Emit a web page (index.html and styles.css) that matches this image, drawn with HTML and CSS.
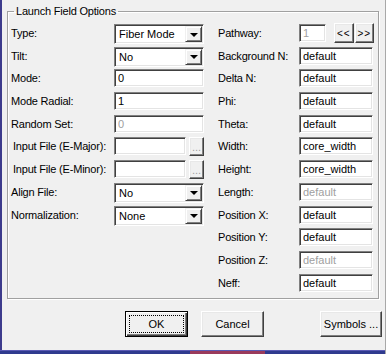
FILE: index.html
```html
<!DOCTYPE html>
<html lang="en">

<head>
    <meta charset="UTF-8">
    <title>Launch Field Options</title>
    <link rel="stylesheet" href="styles.css">
</head>

<body>
    <div class="window">
        <!-- 选项分组框 -->
        <fieldset class="group">
            <legend>Launch Field Options</legend>
            <div class="columns">
                <div class="col col-left">
                    <label>Type:</label>
                    <div class="combo"><span>Fiber Mode</span><i class="drop"></i></div>

                    <label>Tilt:</label>
                    <div class="combo"><span>No</span><i class="drop"></i></div>

                    <label>Mode:</label>
                    <input class="field" type="text" value="0">

                    <label>Mode Radial:</label>
                    <input class="field" type="text" value="1">

                    <label>Random Set:</label>
                    <input class="field" type="text" value="0" disabled>

                    <label class="indent">Input File (E-Major):</label>
                    <div class="file-row">
                        <input class="field" type="text" value="">
                        <button class="btn btn-browse" disabled>...</button>
                    </div>

                    <label class="indent">Input File (E-Minor):</label>
                    <div class="file-row">
                        <input class="field" type="text" value="">
                        <button class="btn btn-browse" disabled>...</button>
                    </div>

                    <label>Align File:</label>
                    <div class="combo"><span>No</span><i class="drop"></i></div>

                    <label>Normalization:</label>
                    <div class="combo"><span>None</span><i class="drop"></i></div>
                </div>

                <div class="col col-right">
                    <label>Pathway:</label>
                    <div class="pathway-row">
                        <input class="field field-path" type="text" value="1" disabled>
                        <button class="btn btn-step">&lt;&lt;</button>
                        <button class="btn btn-step">&gt;&gt;</button>
                    </div>

                    <label>Background N:</label>
                    <input class="field" type="text" value="default">

                    <label>Delta N:</label>
                    <input class="field" type="text" value="default">

                    <label>Phi:</label>
                    <input class="field" type="text" value="default">

                    <label>Theta:</label>
                    <input class="field" type="text" value="default">

                    <label>Width:</label>
                    <input class="field" type="text" value="core_width">

                    <label>Height:</label>
                    <input class="field" type="text" value="core_width">

                    <label>Length:</label>
                    <input class="field" type="text" value="default" disabled>

                    <label>Position X:</label>
                    <input class="field" type="text" value="default">

                    <label>Position Y:</label>
                    <input class="field" type="text" value="default">

                    <label>Position Z:</label>
                    <input class="field" type="text" value="default" disabled>

                    <label>Neff:</label>
                    <input class="field" type="text" value="default">
                </div>
            </div>
        </fieldset>

        <!-- 底部按钮 -->
        <div class="actions">
            <button class="btn btn-action btn-default"><span>OK</span></button>
            <button class="btn btn-action">Cancel</button>
            <button class="btn btn-action btn-symbols">Symbols ...</button>
        </div>

        <div class="frame-bottom"></div>
    </div>
</body>

</html>
```

FILE: styles.css
```css
/* 基本设置 */
body {
    margin: 0;
    background-color: #f0f0f0;
    font-family: 'Liberation Sans', Arial, sans-serif;
    font-size: 11px;
    color: #000;
}

/* 窗口外框 */
.window {
    box-sizing: border-box;
    width: 386px;
    height: 354px;
    border-left: 2px solid #3d3b8c;
    border-right: 1px solid #a8a8a8;
    display: flex;
    flex-direction: column;
}

/* 分组框 */
.group {
    box-sizing: border-box;
    width: 372px;
    margin: 4px 0 0 5px;
    padding: 6px 3px 2px 3px;
    border: 1px solid #a0a0a0;
    box-shadow: 1px 1px 0 #fff, inset 1px 1px 0 #fff;
    min-width: 0;
}

.group legend {
    margin-left: 3px;
    padding: 0 2px;
    line-height: 14px;
    letter-spacing: -0.2px;
}

.columns {
    display: flex;
    gap: 14px;
}

.col {
    display: grid;
    grid-auto-rows: 22.7px;
    align-items: start;
}

.col-left {
    grid-template-columns: 103px 90px;
}

.col-right {
    grid-template-columns: 81px 76px;
}

.col label {
    line-height: 18px;
    white-space: nowrap;
    letter-spacing: -0.2px;
}

.col label.indent {
    padding-left: 2px;
}

/* 凹陷输入框 */
.field {
    box-sizing: border-box;
    width: 74px;
    height: 18px;
    margin: 0;
    padding: 0 3px;
    font: inherit;
    color: #000;
    background-color: #fff;
    border: 1px solid;
    border-color: #808080 #fff #fff #808080;
    box-shadow: inset 1px 1px 0 #404040, inset -1px -1px 0 #e4e4e4;
    outline: none;
}

.col-left .field {
    width: 90px;
}

.field:disabled {
    color: #a0a0a0;
    background-color: #fff;
}

/* 下拉框 */
.combo {
    box-sizing: border-box;
    display: flex;
    align-items: center;
    width: 90px;
    height: 20px;
    padding: 1px;
    background-color: #fff;
    border: 1px solid;
    border-color: #808080 #fff #fff #808080;
    box-shadow: inset 1px 1px 0 #404040, inset -1px -1px 0 #e4e4e4;
}

.combo span {
    flex: 1;
    padding-left: 3px;
    line-height: 16px;
}

.drop {
    box-sizing: border-box;
    width: 17px;
    height: 16px;
    background-color: #f0f0f0;
    border: 1px solid;
    border-color: #f0f0f0 #404040 #404040 #f0f0f0;
    box-shadow: inset 1px 1px 0 #fff, inset -1px -1px 0 #808080;
    display: flex;
    align-items: center;
    justify-content: center;
}

.drop::after {
    content: '';
    border-left: 4px solid transparent;
    border-right: 4px solid transparent;
    border-top: 4px solid #000;
    margin-top: 1px;
}

/* 凸起按钮 */
.btn {
    box-sizing: border-box;
    margin: 0;
    padding: 0;
    font: inherit;
    color: #000;
    background-color: #f0f0f0;
    border: 1px solid;
    border-color: #fff #404040 #404040 #fff;
    box-shadow: inset -1px -1px 0 #808080, inset 1px 1px 0 #e8e8e8;
}

.btn:disabled {
    color: #a0a0a0;
}

.file-row {
    display: flex;
    gap: 3px;
}

.col-left .file-row .field {
    width: 72px;
}

.btn-browse {
    width: 16px;
    height: 19px;
    line-height: 12px;
}

.pathway-row {
    display: flex;
    align-items: flex-start;
}

.col-right .field-path {
    width: 27px;
    margin-right: 8px;
}

.btn-step {
    width: 20px;
    height: 20px;
    margin-top: -1px;
    margin-right: 1px;
    font-size: 10px;
    letter-spacing: 1px;
}

/* 底部按钮区域 */
.actions {
    display: flex;
    align-items: center;
    gap: 13px;
    padding: 12px 0 0 123px;
}

.btn-action {
    width: 63px;
    height: 26px;
}

.btn-default {
    border: 1px solid #000;
    box-shadow: inset 1px 1px 0 #fff, inset -1px -1px 0 #404040, inset -2px -2px 0 #808080;
    padding: 3px;
}

.btn-default span {
    display: block;
    height: 100%;
    box-sizing: border-box;
    border: 1px dotted #000;
    line-height: 16px;
}

.btn-symbols {
    margin-left: auto;
    margin-right: 3px;
    width: 62px;
}

/* 窗口底边 */
.frame-bottom {
    margin-top: auto;
    margin-left: -2px;
    height: 3px;
    background: linear-gradient(to right, #2f3a8e 0 190px, #9a3a5c 190px 265px, #2f3a8e 265px);
    border-top: 1px solid #5a5ab4;
}
```
